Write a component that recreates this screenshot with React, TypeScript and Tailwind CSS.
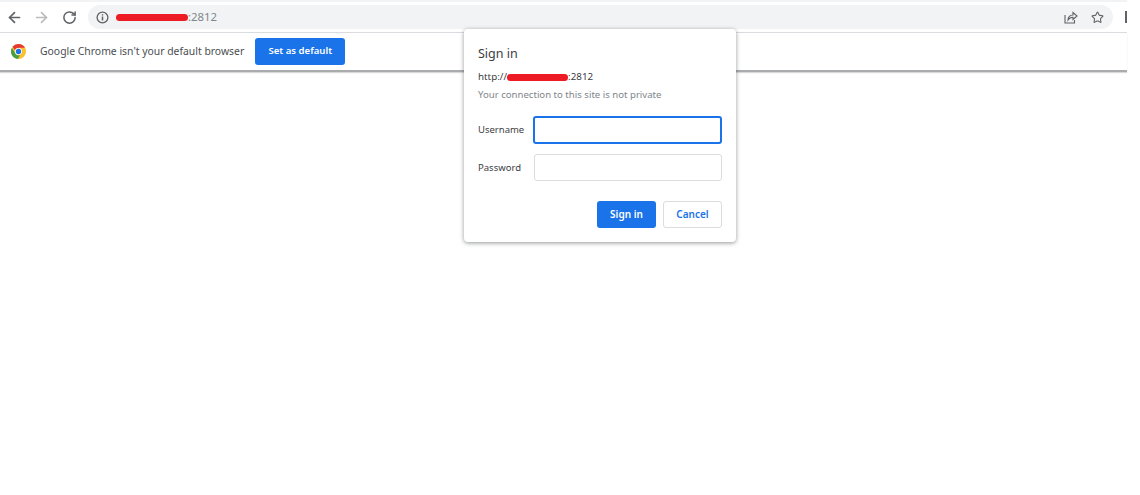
import { ArrowLeft, ArrowRight, RotateCw, Star } from "lucide-react";

// Chrome window with the HTTP basic auth dialog on top of a blank page.

const FONT = "font-['Noto_Sans','Open_Sans',sans-serif]";

function ChromeLogo() {
  return (
    <svg width="15" height="15" viewBox="0 0 48 48">
      <circle cx="24" cy="24" r="24" fill="#fbc02d" />
      <path d="M24 0a24 24 0 0 1 20.8 12H24a12 12 0 0 0-11.3 8L5 8.6A24 24 0 0 1 24 0z" fill="#e53935" />
      <path d="M3.2 12l10.4 18A12 12 0 0 0 29 35L22 48A24 24 0 0 1 3.2 12z" fill="#43a047" />
      <circle cx="24" cy="24" r="11" fill="#fff" />
      <circle cx="24" cy="24" r="8.5" fill="#1a73e8" />
    </svg>
  );
}

function InfoIcon() {
  return (
    <svg width="13" height="13" viewBox="0 0 13 13" fill="none" stroke="#5f6368">
      <circle cx="6.5" cy="6.5" r="5.4" strokeWidth="1.3" />
      <path d="M6.5 5.6v4M6.5 3.2v1.4" strokeWidth="1.5" />
    </svg>
  );
}

function ShareIcon() {
  return (
    <svg width="14" height="14" viewBox="0 0 14 14" fill="none" stroke="#5f6368" strokeWidth="1.1">
      <path d="M1 5v8h9.5v-3" />
      <path d="M4 10c0-3 2-5 5-5V2.5L13 6l-4 3.5V7.2C7 7.2 5.2 8 4 10z" />
    </svg>
  );
}

function Redacted({ className }: { className: string }) {
  return <span className={`inline-block rounded-full bg-[#ed1c24] ${className}`} />;
}

function Field({ label, focused }: { label: string; focused?: boolean }) {
  return (
    <div className="flex h-[27px] items-center">
      <label className="w-[55px] shrink-0 pt-[2px] text-[9.5px] text-[#3c4043]">{label}</label>
      <div
        className={
          focused
            ? "h-[28px] w-[190px] rounded-[3px] border-2 border-[#1a73e8] bg-white"
            : "ml-px h-[27px] w-[188px] rounded-[3px] border border-[#dadce0] bg-white"
        }
      />
    </div>
  );
}

export default function App() {
  return (
    <div className={`relative h-[495px] w-[1140px] overflow-hidden bg-white ${FONT}`}>
      <div className="w-[1127px]">
        <div className="h-[2px] bg-[#f1f3f4]" />
        <div className="flex h-[31px] items-center border-b border-[#dadce0] bg-white">
          <div className="flex w-[88px] shrink-0 items-center pl-[6px]">
            <ArrowLeft size={17} color="#5f6368" strokeWidth={2.4} />
            <ArrowRight size={17} color="#babcbe" strokeWidth={2.4} className="ml-[10px]" />
            <RotateCw size={15} color="#5f6368" strokeWidth={2.4} className="ml-[12px]" />
          </div>
          <div className="flex h-[24px] w-[1025px] items-center rounded-full bg-[#f1f3f4] pl-[8px] pr-[9px]">
            <InfoIcon />
            <Redacted className="ml-[7px] h-[7px] w-[72px]" />
            <span className="text-[11.4px] text-[#80868b]">:2812</span>
            <div className="ml-auto flex items-center gap-[13px]">
              <ShareIcon />
              <Star size={13} color="#5f6368" strokeWidth={2} />
            </div>
          </div>
          <div className="ml-auto h-[12px] w-[2px] bg-[#5f6368]" />
        </div>
        <div className="flex h-[39px] items-center border-b-2 border-[#a9abad] bg-white pl-[11px] shadow-[0_1px_1px_rgba(0,0,0,0.15)]">
          <ChromeLogo />
          <span className="ml-[14px] text-[10.4px] text-[#4a4d51]">Google Chrome isn't your default browser</span>
          <button className="ml-[11px] h-[27px] w-[90px] rounded-[3px] bg-[#1a73e8] text-[9.6px] font-semibold text-white">
            Set as default
          </button>
        </div>
      </div>

      <div className="absolute left-[464px] top-[29px] h-[213px] w-[272px] rounded-[4px] bg-white px-[14px] pt-[16px] shadow-[0_1px_4px_rgba(60,64,67,0.55)]">
        <h2 className="text-[12.5px] leading-[17px] text-[#3c4043]">Sign in</h2>
        <div className="mt-[8px] flex items-center text-[9.8px] leading-[14px] text-[#3c4043]">
          <span>http://</span>
          <Redacted className="h-[7px] w-[61px]" />
          <span>:2812</span>
        </div>
        <p className="mt-[4px] text-[9.6px] leading-[14px] text-[#80868b]">Your connection to this site is not private</p>
        <div className="mt-[14px] flex flex-col gap-[11px]">
          <Field label="Username" focused />
          <Field label="Password" />
        </div>
        <div className="mt-[20px] flex justify-end gap-[7px]">
          <button className="h-[27px] w-[59px] rounded-[3px] bg-[#1a73e8] text-[10px] font-semibold text-white">Sign in</button>
          <button className="h-[27px] w-[59px] rounded-[3px] border border-[#dadce0] bg-white text-[10px] font-semibold text-[#1a73e8]">
            Cancel
          </button>
        </div>
      </div>
    </div>
  );
}
